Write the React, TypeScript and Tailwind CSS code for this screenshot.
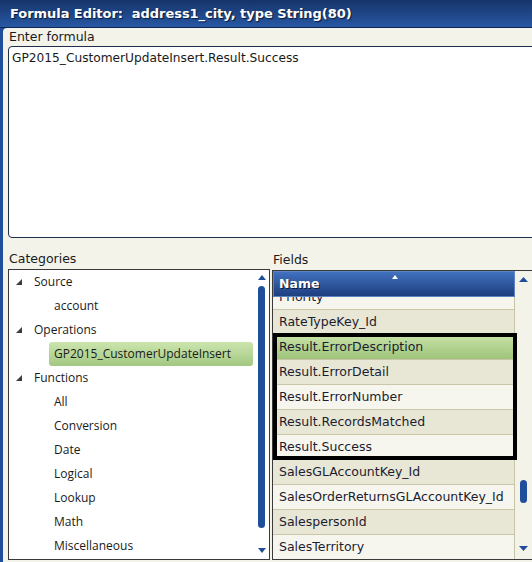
import React from "react";

const tree: { label: string; level: 0 | 1; selected?: boolean }[] = [
  { label: "Source", level: 0 },
  { label: "account", level: 1 },
  { label: "Operations", level: 0 },
  { label: "GP2015_CustomerUpdateInsert", level: 1, selected: true },
  { label: "Functions", level: 0 },
  { label: "All", level: 1 },
  { label: "Conversion", level: 1 },
  { label: "Date", level: 1 },
  { label: "Logical", level: 1 },
  { label: "Lookup", level: 1 },
  { label: "Math", level: 1 },
  { label: "Miscellaneous", level: 1 },
];

const fields = [
  "Priority",
  "RateTypeKey_Id",
  "Result.ErrorDescription",
  "Result.ErrorDetail",
  "Result.ErrorNumber",
  "Result.RecordsMatched",
  "Result.Success",
  "SalesGLAccountKey_Id",
  "SalesOrderReturnsGLAccountKey_Id",
  "SalespersonId",
  "SalesTerritory",
];

function Expander() {
  return (
    <svg width="8" height="8" viewBox="0 0 8 8" className="shrink-0">
      <polygon points="7,1 7,7 1,7" fill="#3c3c3c" />
    </svg>
  );
}

function UpArrow({ w = 8 }: { w?: number }) {
  return (
    <svg width={w} height="5" viewBox={`0 0 ${w} 5`} className="shrink-0">
      <polygon points={`0,5 ${w},5 ${w / 2},0`} fill="#1f4e9a" />
    </svg>
  );
}
function DownArrow({ w = 8 }: { w?: number }) {
  return (
    <svg width={w} height="5" viewBox={`0 0 ${w} 5`} className="shrink-0">
      <polygon points={`0,0 ${w},0 ${w / 2},5`} fill="#1f4e9a" />
    </svg>
  );
}

export default function App() {
  return (
    <div className="w-[532px] h-[562px] overflow-hidden bg-[#1f4e9a] flex flex-col font-['DejaVu_Sans',Verdana,sans-serif] text-[#1a1a1a]">
      <div className="h-[28px] shrink-0 bg-gradient-to-b from-[#16346a] to-[#2858a4] border-b border-[#0d2656] flex items-center pl-[10px]">
        <span className="text-white font-bold text-[13px] tracking-[-0.05px] whitespace-pre [text-shadow:1px_1px_1px_#0a1a3a]">
          Formula Editor:  address1_city, type String(80)
        </span>
      </div>
      <div className="flex-1 ml-[3px] bg-[#f4f3ea] rounded-tl-[4px] flex flex-col overflow-hidden">
        <div className="h-[18px] shrink-0 pl-[6px] pt-[1px] text-[12.5px] leading-[16px]">Enter formula</div>
        <div className="ml-[5px] w-[540px] h-[192px] shrink-0 bg-white border border-[#1f2f4a] rounded-[4px] pl-[3px] pt-[4px] text-[12.2px] leading-[15px]">
          GP2015_CustomerUpdateInsert.Result.Success
        </div>
        <div className="flex ml-[5px] gap-[2px]">
          {/* Categories */}
          <div className="flex flex-col w-[262px] shrink-0">
            <div className="h-[31px] flex items-end pb-[3px] pl-[1px] text-[12.5px] leading-[15px]">Categories</div>
            <div className="h-[291px] border border-[#3a3a3a] bg-white flex overflow-hidden">
              <div className="flex-1 flex flex-col font-['Open_Sans',sans-serif] text-[12px]">
                {tree.map((t) => (
                  <div key={t.label} className="h-[24px] shrink-0 flex items-center">
                    {t.level === 0 ? (
                      <div className="flex items-center pl-[6px]">
                        <Expander />
                        <span className="ml-[11px]">{t.label}</span>
                      </div>
                    ) : t.selected ? (
                      <div className="ml-[40px] w-[204px] h-[24px] flex items-center pl-[5px] rounded-[3px] bg-gradient-to-b from-[#cce5ae] to-[#a3c882]">
                        {t.label}
                      </div>
                    ) : (
                      <span className="pl-[45px]">{t.label}</span>
                    )}
                  </div>
                ))}
              </div>
              <div className="w-[15px] shrink-0 flex flex-col items-center pt-[5px] pb-[6px]">
                <UpArrow />
                <div className="mt-[6px] w-[7px] h-[242px] rounded-full bg-[#1f4e9a]" />
                <div className="flex-1" />
                <DownArrow />
              </div>
            </div>
          </div>
          {/* Fields */}
          <div className="flex flex-col w-[262px] shrink-0">
            <div className="h-[32px] flex items-end pb-[3px] pl-[1px] text-[12.5px] leading-[15px]">Fields</div>
            <div className="relative">
              <div className="h-[290px] border border-[#3a3a3a] bg-[#f4f3ea] flex overflow-hidden">
                <div className="w-[242px] shrink-0 flex flex-col overflow-hidden">
                  <div className="relative h-[26px] shrink-0 bg-gradient-to-b from-[#4271bf] to-[#1d3f7f] border border-[#5a84c4] flex items-center pl-[5px] z-10">
                    <span className="text-white font-bold text-[12.5px] [text-shadow:1px_1px_0_#0a1a3a]">Name</span>
                    <svg width="6" height="4" viewBox="0 0 6 4" className="absolute left-[118px] top-[3px]">
                      <polygon points="0,4 6,4 3,0" fill="#ffffff" />
                    </svg>
                  </div>
                  <div className="flex flex-col -mt-[12px] border-r border-[#c6c4a4]">
                    {fields.map((f, i) => {
                      const green = f === "Result.ErrorDescription";
                      const bg = green
                        ? "bg-gradient-to-b from-[#c8e2a8] to-[#9ec47b]"
                        : i % 2 === 1
                        ? "bg-[#e8e7d6]"
                        : "bg-[#f7f6ee]";
                      return (
                        <div
                          key={f}
                          className={`h-[25px] shrink-0 flex items-center pl-[6px] border-b border-[#c9c7a8] text-[12.5px] text-[#1c1c30] ${bg}`}
                        >
                          {f}
                        </div>
                      );
                    })}
                  </div>
                </div>
                <div className="flex-1 flex flex-col items-center pt-[6px] pb-[8px] pr-[2px]">
                  <UpArrow w={9} />
                  <div className="mt-[198px] w-[7px] h-[23px] rounded-full bg-[#1f4e9a]" />
                  <div className="flex-1" />
                  <DownArrow w={9} />
                </div>
              </div>
              <div className="absolute left-[1px] top-[63px] w-[244px] h-[127px] border-4 border-black pointer-events-none" />
            </div>
          </div>
        </div>
      </div>
    </div>
  );
}
